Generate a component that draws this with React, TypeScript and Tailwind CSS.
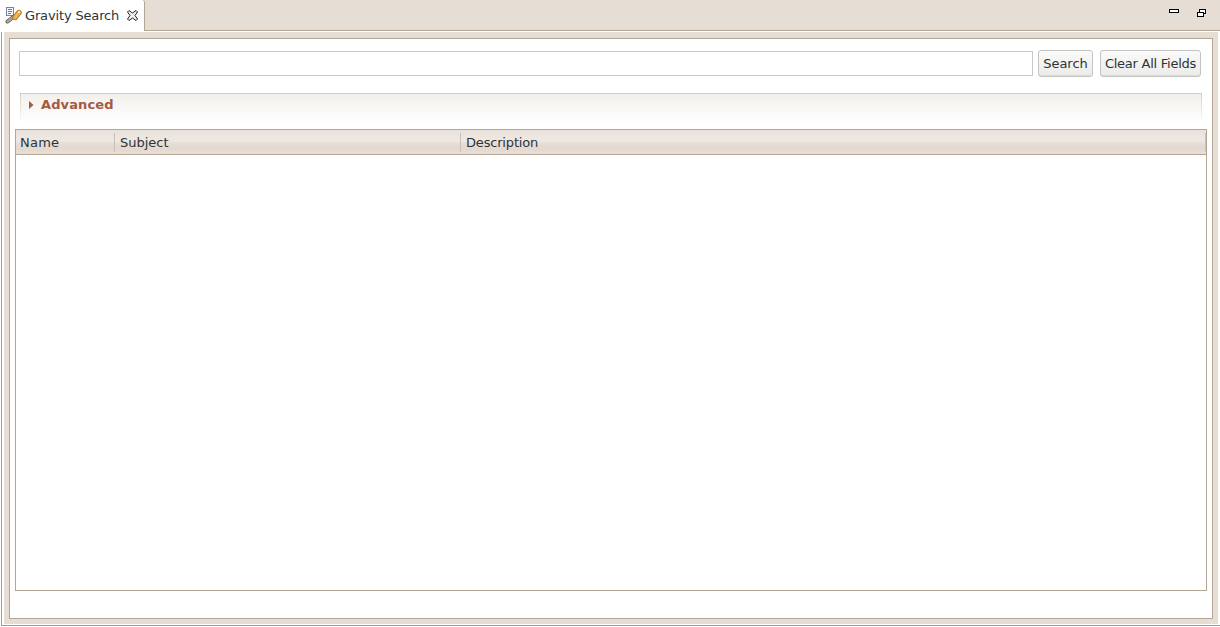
const font = { fontFamily: '"DejaVu Sans", sans-serif' };

function GravityIcon() {
  return (
    <svg width="17" height="17" viewBox="0 0 17 17" className="shrink-0">
      <rect x="1.5" y="0.5" width="7" height="8" fill="#f4f7fb" stroke="#75849f" />
      <path d="M3 2.5h4M3 4.5h4M3 6.5h3" stroke="#5f7fb0" />
      <path d="M2.5 14.5L9 9.5" stroke="#5a5a52" strokeWidth="4" strokeLinecap="round" />
      <path d="M2.5 14.5L9 9.5" stroke="#a8a89e" strokeWidth="2.4" strokeLinecap="round" />
      <path d="M10 10.5l4-5" stroke="#a36d1e" strokeWidth="5.4" strokeLinecap="round" />
      <path d="M10 10.5l4-5" stroke="#efb24c" strokeWidth="3.8" strokeLinecap="round" />
      <circle cx="14" cy="5" r="1" fill="#fff3c8" />
    </svg>
  );
}

function CloseIcon() {
  return (
    <svg width="11" height="11" viewBox="0 0 11 11" className="block shrink-0">
      <path
        d="M0.5 2L2 .5 5.5 3 9 .5 10.5 2 8 5.5 10.5 9 9 10.5 5.5 8 2 10.5 .5 9 3 5.5z"
        fill="#f2eee9"
        stroke="#222"
        strokeWidth="1"
      />
    </svg>
  );
}

function Btn({ label, w, track }: { label: string; w: string; track: string }) {
  return (
    <button
      className={`h-[27px] ${w} ${track} shrink-0 rounded-[3px] border border-[#c4c4c2] bg-gradient-to-b from-[#fafafa] to-[#ebebe9] text-[13px] text-[#2e3436] shadow-[inset_0_-1px_0_#dcdcda]`}
    >
      {label}
    </button>
  );
}

function HeaderCell({ label, w, pad, track }: { label: string; w: string; pad: string; track: string }) {
  return (
    <div className={`${w} ${pad} ${track} relative flex h-full items-center pt-px`}>
      <span>{label}</span>
      <span className="absolute right-0 top-[3px] h-[19px] w-px bg-[#cdbfb2]" />
    </div>
  );
}

export default function App() {
  return (
    <div className="flex h-[627px] w-[1220px] flex-col overflow-hidden bg-white text-[13px] text-[#2e3436]" style={font}>
      <div className="flex h-[31px] shrink-0 items-start border-b border-[#b5a595] bg-[#e6ddd5]">
        <div className="flex h-[31px] w-[145px] shrink-0 items-center rounded-tr-[3px] border-r border-[#b5a595] bg-white pl-[5px]">
          <GravityIcon />
          <span className="ml-[3px] tracking-[-0.15px]">Gravity Search</span>
          <span className="ml-[8px]"><CloseIcon /></span>
        </div>
        <div className="flex flex-1 items-start justify-end pr-[14px] pt-[9px]">
          <span className="h-[4px] w-[10px] border border-black bg-white" />
          <svg width="9" height="8" viewBox="0 0 9 8" className="ml-[18px] block">
            <rect x="2.5" y="0.5" width="6" height="4" fill="#fff" stroke="#000" />
            <rect x="0.5" y="3.5" width="6" height="4" fill="#fff" stroke="#000" />
          </svg>
        </div>
      </div>
      <div className="flex flex-1 pb-px pl-px pt-px">
        <div className="flex flex-1 border-b border-l border-[#a89a8d] pb-px pl-[2px] pr-[2px]">
          <div className="flex flex-1 flex-col bg-[#e6ddd5] pb-[5px] pl-[5px] pr-[5px] pt-[6px]">
            <div className="flex flex-1 flex-col border border-[#b5a595] bg-white pb-[27px] pl-[5px] pr-[5px] pt-[11px]">
              <div className="flex items-center pl-[4px] pr-[6px]">
                <div className="h-[25px] flex-1 border border-[#c9c9c7] bg-white" />
                <div className="ml-[5px]"><Btn label="Search" w="w-[55px]" track="tracking-normal" /></div>
                <div className="ml-[7px]"><Btn label="Clear All Fields" w="w-[101px]" track="tracking-[-0.25px]" /></div>
              </div>
              <div className="mx-[5px] mb-[6px] mt-[16px] h-[30px] shrink-0 rounded-t-[3px] border-x border-t bg-gradient-to-b from-[#f3efeb] to-white [border-image:linear-gradient(#d8cabf,#ffffff)_1]">
                <div className="flex h-[21px] items-center pl-[8px]">
                  <svg width="5" height="8" viewBox="0 0 5 8" className="block"><path d="M0 0l4.5 4L0 8z" fill="#9c5e45" /></svg>
                  <span className="ml-[7px] font-bold tracking-[0.12px] text-[#a25b44]">Advanced</span>
                </div>
              </div>
              <div className="flex flex-1 flex-col border border-[#b5a595]">
                <div className="flex h-[25px] shrink-0 border-b border-[#b5a595] bg-[linear-gradient(180deg,#e9e1da_0%,#efe9e4_45%,#e6ddd5_55%,#e3d9d0_80%,#e8dfd8_100%)]">
                  <HeaderCell label="Name" w="w-[99px]" pad="pl-[4px]" track="tracking-[0.25px]" />
                  <HeaderCell label="Subject" w="w-[346px]" pad="pl-[5px]" track="tracking-normal" />
                  <HeaderCell label="Description" w="flex-1" pad="pl-[5px]" track="tracking-[-0.18px]" />
                </div>
                <div className="flex-1 bg-white" />
              </div>
            </div>
          </div>
        </div>
      </div>
    </div>
  );
}
